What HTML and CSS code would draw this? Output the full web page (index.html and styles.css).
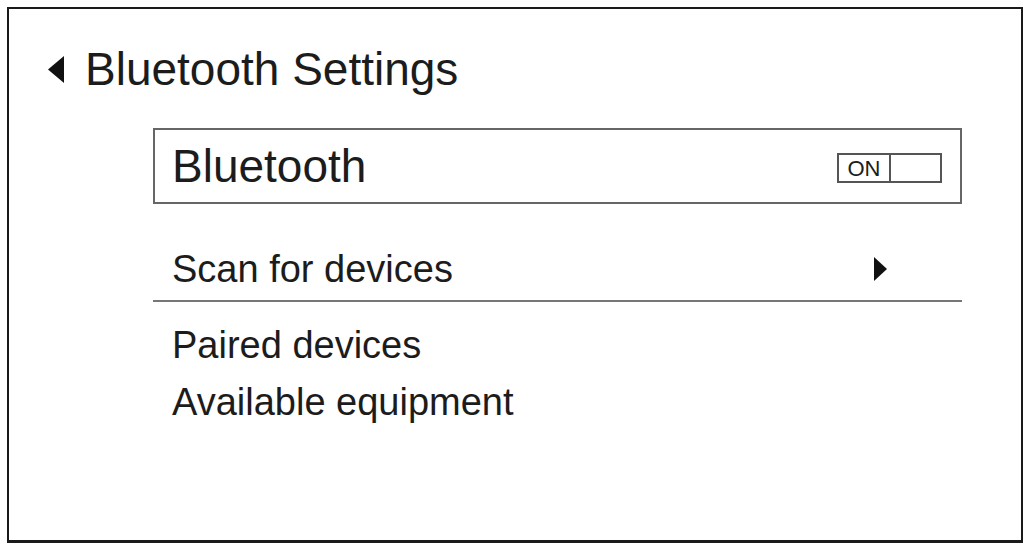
FILE: index.html
```html
<!DOCTYPE html>
<html lang="en">
<head>
    <meta charset="UTF-8">
    <meta name="viewport" content="width=device-width, initial-scale=1.0">
    <title>Bluetooth Settings</title>
    <link rel="stylesheet" href="styles.css">
</head>
<body>
    <div class="screen">
        <div class="header">
            <svg class="back" width="16" height="27" viewBox="0 0 16 27">
                <polygon points="16,0 16,27 0,13.5" fill="#111"/>
            </svg>
            <h1>Bluetooth Settings</h1>
        </div>

        <div class="content">
            <div class="bt-box">
                <span class="bt-label">Bluetooth</span>
                <div class="toggle">
                    <span class="toggle-on">ON</span>
                    <span class="toggle-off"></span>
                </div>
            </div>

            <div class="scan-row">
                <span>Scan for devices</span>
                <svg class="next" width="13" height="24" viewBox="0 0 13 24">
                    <polygon points="0,0 13,12 0,24" fill="#111"/>
                </svg>
            </div>

            <ul class="device-list">
                <li>Paired devices</li>
                <li>Available equipment</li>
            </ul>
        </div>
    </div>
</body>
</html>
```

FILE: styles.css
```css
body {
    margin: 0;
    background: #fff;
    font-family: "Liberation Sans", Arial, sans-serif;
    color: #1c1c1c;
}
.screen {
    margin: 7px 0 0 7px;
    width: 1012px;
    height: 531px;
    border: 2px solid #1a1a1a;
    border-bottom-width: 3px;
    box-sizing: content-box;
}
.header {
    display: flex;
    align-items: center;
    padding: 33px 0 0 39px;
    gap: 21px;
}
.header h1 {
    margin: 0;
    font-size: 46px;
    font-weight: normal;
    line-height: 54px;
}
.content {
    margin: 32px 59px 0 144px;
}
.bt-box {
    display: flex;
    align-items: center;
    justify-content: space-between;
    border: 2px solid #666;
    padding: 0 18px 0 17px;
    height: 72px;
}
.bt-label {
    font-size: 46px;
    line-height: 72px;
}
.toggle {
    display: flex;
    width: 101px;
    height: 26px;
    margin-top: 4px;
    border: 2px solid #555;
}
.toggle-on {
    width: 50px;
    border-right: 2px solid #555;
    font-size: 22px;
    line-height: 27px;
    text-align: center;
}
.toggle-off {
    flex: 1;
}
.scan-row {
    display: flex;
    align-items: center;
    justify-content: space-between;
    margin-top: 42px;
    padding: 0 75px 8px 19px;
    border-bottom: 2px solid #777;
    font-size: 38px;
    line-height: 46px;
}
.device-list {
    list-style: none;
    margin: 15px 0 0;
    padding: 0 0 0 19px;
    font-size: 38px;
    line-height: 57px;
}
```
